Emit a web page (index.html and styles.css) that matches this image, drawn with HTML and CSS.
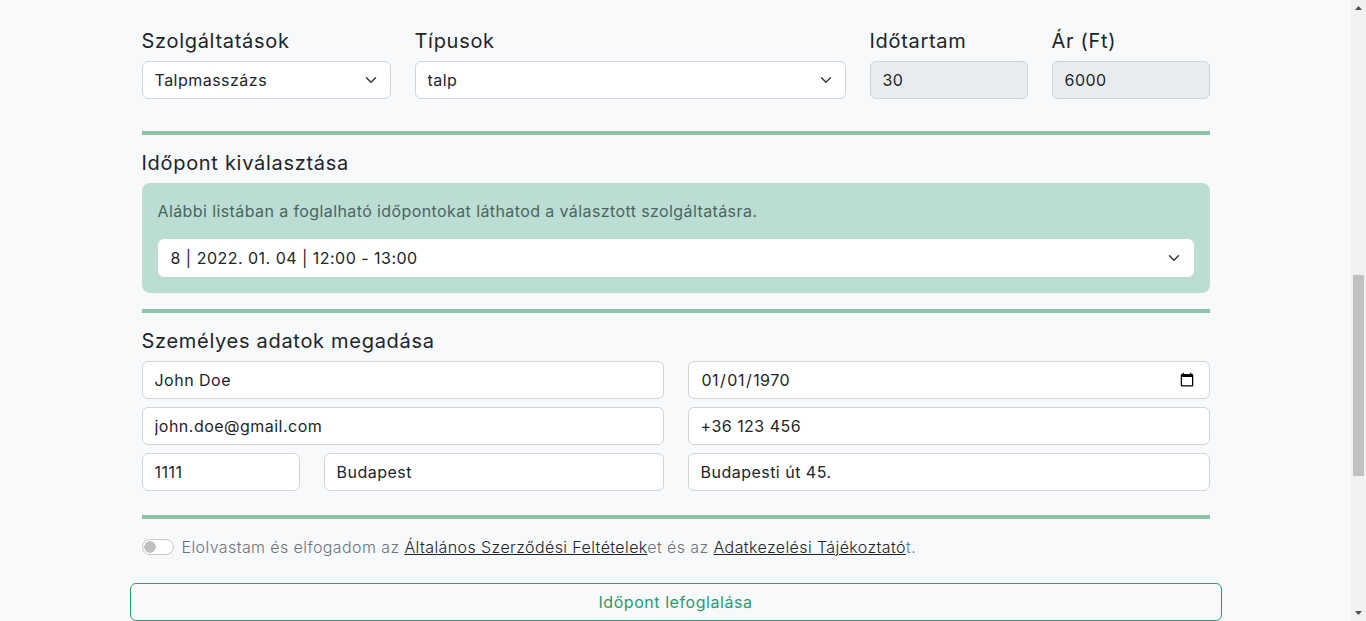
FILE: index.html
```html
<!DOCTYPE html>
<html lang="hu">
<head>
<meta charset="utf-8">
<title>Időpontfoglalás</title>
<link rel="stylesheet" href="styles.css">
</head>
<body>
<main class="container">
  <div class="row-services">
    <div class="col">
      <label class="lbl">Szolgáltatások</label>
      <div class="select-wrap">
        <select class="field select"><option>Talpmasszázs</option></select>
        <svg class="chev" width="16" height="12" viewBox="0 0 16 16"><path d="M2 5l6 6 6-6" fill="none" stroke="#343a40" stroke-width="2" stroke-linecap="round" stroke-linejoin="round"/></svg>
      </div>
    </div>
    <div class="col">
      <label class="lbl">Típusok</label>
      <div class="select-wrap">
        <select class="field select"><option>talp</option></select>
        <svg class="chev" width="16" height="12" viewBox="0 0 16 16"><path d="M2 5l6 6 6-6" fill="none" stroke="#343a40" stroke-width="2" stroke-linecap="round" stroke-linejoin="round"/></svg>
      </div>
    </div>
    <div class="col">
      <label class="lbl">Időtartam</label>
      <input class="field" type="text" value="30" disabled>
    </div>
    <div class="col">
      <label class="lbl">Ár (Ft)</label>
      <input class="field" type="text" value="6000" disabled>
    </div>
  </div>

  <hr class="sep sep-first">

  <h5 class="section-title">Időpont kiválasztása</h5>
  <div class="slot-box">
    <p class="slot-text">Alábbi listában a foglalható időpontokat láthatod a választott szolgáltatásra.</p>
    <div class="select-wrap">
      <select class="field select slot-select"><option>8 | 2022. 01. 04 | 12:00 - 13:00</option></select>
      <svg class="chev" width="16" height="12" viewBox="0 0 16 16"><path d="M2 5l6 6 6-6" fill="none" stroke="#343a40" stroke-width="2" stroke-linecap="round" stroke-linejoin="round"/></svg>
    </div>
  </div>

  <hr class="sep">

  <h5 class="section-title">Személyes adatok megadása</h5>
  <div class="row-personal">
    <div class="stack">
      <input class="field" type="text" value="John Doe">
      <input class="field" type="email" value="john.doe@gmail.com">
      <div class="row-city">
        <input class="field" type="text" value="1111">
        <input class="field" type="text" value="Budapest">
      </div>
    </div>
    <div class="stack">
      <input class="field" type="date" value="1970-01-01">
      <input class="field" type="tel" value="+36 123 456">
      <input class="field" type="text" value="Budapesti út 45.">
    </div>
  </div>

  <hr class="sep sep-last">

  <div class="accept">
    <input class="switch" type="checkbox" id="accept">
    <label for="accept" class="accept-label">Elolvastam és elfogadom az <a href="#">Általános Szerződési Feltételek</a>et és az <a href="#">Adatkezelési Tájékoztató</a>t.</label>
  </div>

  <button class="btn-book" type="button">Időpont lefoglalása</button>
</main>

<aside class="scrollbar" aria-hidden="true">
  <div class="sb-arrow"><svg width="15" height="15" viewBox="0 0 15 15"><path d="M4 10h7L7.5 6z" fill="#505050"/></svg></div>
  <div class="sb-track"><div class="sb-thumb"></div></div>
  <div class="sb-arrow"><svg width="15" height="15" viewBox="0 0 15 15"><path d="M4 5h7L7.5 9z" fill="#505050"/></svg></div>
</aside>
</body>
</html>
```

FILE: styles.css
```css
* { box-sizing: border-box; }
body {
  margin: 0;
  padding-right: 15px;
  background: #f8f9fa;
  color: #212529;
  font-family: Inter, "Open Sans", sans-serif;
  font-size: 16px;
  line-height: 1.5;
  letter-spacing: 0.025em;
}

.container {
  width: 1092px;
  margin: 0 auto;
  padding: 29px 12px 0;
}

.row-services {
  display: grid;
  grid-template-columns: 249fr 431fr 158fr 158fr;
  column-gap: 24px;
}
.col { display: flex; flex-direction: column; }
.lbl {
  font-size: 20px;
  line-height: 24px;
  margin-bottom: 8px;
  letter-spacing: 0.035em;
}

.field {
  display: block;
  width: 100%;
  height: 38px;
  padding: 6px 12px;
  font: inherit;
  font-size: 16px;
  line-height: 24px;
  letter-spacing: 0.03em;
  color: #212529;
  background: #fff;
  border: 1px solid #ced4da;
  border-radius: 6px;
  margin: 0;
}
.field:disabled { background: #e9ecef; color: #212529; opacity: 1; }

.select-wrap { position: relative; }
.select { appearance: none; -webkit-appearance: none; padding-right: 36px; }
.chev { position: absolute; right: 12px; top: 13px; pointer-events: none; }

.sep {
  border: 0;
  height: 4px;
  background: #8bc4a6;
  margin: 16px 0;
}
.sep-first { margin-top: 32px; }
.section-title {
  margin: 0 0 8px;
  font-size: 20px;
  line-height: 24px;
  font-weight: 400;
  letter-spacing: 0.035em;
}
.slot-box {
  background: #bbddd3;
  border-radius: 8px;
  padding: 16px;
}
.slot-text {
  margin: 0 0 16px;
  color: #4a6560;
}
.slot-select { border-color: #fff; }

.row-personal {
  display: grid;
  grid-template-columns: 1fr 1fr;
  column-gap: 24px;
}
.stack { display: flex; flex-direction: column; gap: 8px; }
.row-city {
  display: grid;
  grid-template-columns: 158fr 340fr;
  column-gap: 24px;
}
.sep-last { margin-top: 24px; }

.accept {
  display: flex;
  align-items: center;
  gap: 8px;
  height: 24px;
}
.switch {
  appearance: none;
  -webkit-appearance: none;
  width: 32px;
  height: 16px;
  margin: 0;
  flex: none;
  border: 1px solid #c5c7c9;
  border-radius: 16px;
  background: radial-gradient(circle at 7px 50%, #bfbfbf 5.5px, #fff 6px);
}
.accept-label {
  color: #6c757d;
  font-weight: 300;
}
.accept-label a { color: #212529; text-decoration: underline; }

.btn-book {
  display: block;
  width: calc(100% + 24px);
  margin: 24px -12px 0;
  height: 38px;
  background: transparent;
  border: 1px solid #2a9a70;
  border-radius: 6px;
  color: #2a9a70;
  font: inherit;
  font-size: 16px;
  letter-spacing: 0.035em;
  cursor: pointer;
}

.scrollbar {
  position: fixed;
  top: 0;
  right: 0;
  width: 15px;
  height: 100vh;
  background: #f1f1f1;
  display: flex;
  flex-direction: column;
}
.sb-arrow { height: 15px; flex: none; }
.sb-arrow svg { display: block; }
.sb-track { flex: 1; padding-top: 260px; }
.sb-thumb {
  width: 11px;
  height: 201px;
  margin-left: 2px;
  background: #c1c1c1;
}
```
